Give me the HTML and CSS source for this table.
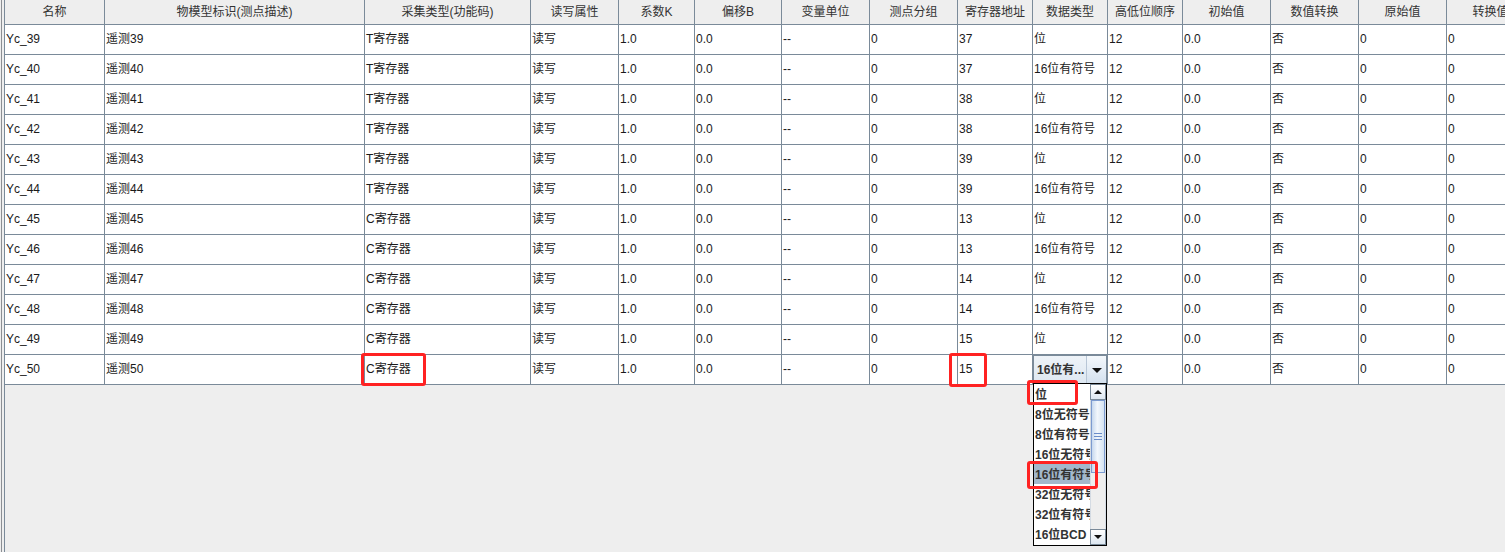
FILE: index.html
```html
<!DOCTYPE html>
<html lang="zh">
<head>
<meta charset="utf-8">
<title>测点表</title>
<link rel="stylesheet" href="styles.css">
</head>
<body>
<div class="screen">
  <div class="pane">
    <div class="table">
      <div class="row head">
        <div class="c">名称</div><div class="c">物模型标识(测点描述)</div><div class="c">采集类型(功能码)</div><div class="c">读写属性</div><div class="c">系数K</div><div class="c">偏移B</div><div class="c">变量单位</div><div class="c">测点分组</div><div class="c">寄存器地址</div><div class="c">数据类型</div><div class="c">高低位顺序</div><div class="c">初始值</div><div class="c">数值转换</div><div class="c">原始值</div><div class="c">转换值</div>
      </div>
      <div class="row"><div class="c">Yc_39</div><div class="c">遥测39</div><div class="c">T寄存器</div><div class="c">读写</div><div class="c">1.0</div><div class="c">0.0</div><div class="c">--</div><div class="c">0</div><div class="c">37</div><div class="c">位</div><div class="c">12</div><div class="c">0.0</div><div class="c">否</div><div class="c">0</div><div class="c">0</div></div>
      <div class="row"><div class="c">Yc_40</div><div class="c">遥测40</div><div class="c">T寄存器</div><div class="c">读写</div><div class="c">1.0</div><div class="c">0.0</div><div class="c">--</div><div class="c">0</div><div class="c">37</div><div class="c">16位有符号</div><div class="c">12</div><div class="c">0.0</div><div class="c">否</div><div class="c">0</div><div class="c">0</div></div>
      <div class="row"><div class="c">Yc_41</div><div class="c">遥测41</div><div class="c">T寄存器</div><div class="c">读写</div><div class="c">1.0</div><div class="c">0.0</div><div class="c">--</div><div class="c">0</div><div class="c">38</div><div class="c">位</div><div class="c">12</div><div class="c">0.0</div><div class="c">否</div><div class="c">0</div><div class="c">0</div></div>
      <div class="row"><div class="c">Yc_42</div><div class="c">遥测42</div><div class="c">T寄存器</div><div class="c">读写</div><div class="c">1.0</div><div class="c">0.0</div><div class="c">--</div><div class="c">0</div><div class="c">38</div><div class="c">16位有符号</div><div class="c">12</div><div class="c">0.0</div><div class="c">否</div><div class="c">0</div><div class="c">0</div></div>
      <div class="row"><div class="c">Yc_43</div><div class="c">遥测43</div><div class="c">T寄存器</div><div class="c">读写</div><div class="c">1.0</div><div class="c">0.0</div><div class="c">--</div><div class="c">0</div><div class="c">39</div><div class="c">位</div><div class="c">12</div><div class="c">0.0</div><div class="c">否</div><div class="c">0</div><div class="c">0</div></div>
      <div class="row"><div class="c">Yc_44</div><div class="c">遥测44</div><div class="c">T寄存器</div><div class="c">读写</div><div class="c">1.0</div><div class="c">0.0</div><div class="c">--</div><div class="c">0</div><div class="c">39</div><div class="c">16位有符号</div><div class="c">12</div><div class="c">0.0</div><div class="c">否</div><div class="c">0</div><div class="c">0</div></div>
      <div class="row"><div class="c">Yc_45</div><div class="c">遥测45</div><div class="c">C寄存器</div><div class="c">读写</div><div class="c">1.0</div><div class="c">0.0</div><div class="c">--</div><div class="c">0</div><div class="c">13</div><div class="c">位</div><div class="c">12</div><div class="c">0.0</div><div class="c">否</div><div class="c">0</div><div class="c">0</div></div>
      <div class="row"><div class="c">Yc_46</div><div class="c">遥测46</div><div class="c">C寄存器</div><div class="c">读写</div><div class="c">1.0</div><div class="c">0.0</div><div class="c">--</div><div class="c">0</div><div class="c">13</div><div class="c">16位有符号</div><div class="c">12</div><div class="c">0.0</div><div class="c">否</div><div class="c">0</div><div class="c">0</div></div>
      <div class="row"><div class="c">Yc_47</div><div class="c">遥测47</div><div class="c">C寄存器</div><div class="c">读写</div><div class="c">1.0</div><div class="c">0.0</div><div class="c">--</div><div class="c">0</div><div class="c">14</div><div class="c">位</div><div class="c">12</div><div class="c">0.0</div><div class="c">否</div><div class="c">0</div><div class="c">0</div></div>
      <div class="row"><div class="c">Yc_48</div><div class="c">遥测48</div><div class="c">C寄存器</div><div class="c">读写</div><div class="c">1.0</div><div class="c">0.0</div><div class="c">--</div><div class="c">0</div><div class="c">14</div><div class="c">16位有符号</div><div class="c">12</div><div class="c">0.0</div><div class="c">否</div><div class="c">0</div><div class="c">0</div></div>
      <div class="row"><div class="c">Yc_49</div><div class="c">遥测49</div><div class="c">C寄存器</div><div class="c">读写</div><div class="c">1.0</div><div class="c">0.0</div><div class="c">--</div><div class="c">0</div><div class="c">15</div><div class="c">位</div><div class="c">12</div><div class="c">0.0</div><div class="c">否</div><div class="c">0</div><div class="c">0</div></div>
      <div class="row"><div class="c">Yc_50</div><div class="c">遥测50</div><div class="c">C寄存器</div><div class="c">读写</div><div class="c">1.0</div><div class="c">0.0</div><div class="c">--</div><div class="c">0</div><div class="c">15</div><div class="c combo-cell"><div class="combo"><span class="combo-text">16位有...</span><span class="combo-btn"><span class="tri-down"></span></span></div></div><div class="c">12</div><div class="c">0.0</div><div class="c">否</div><div class="c">0</div><div class="c">0</div></div>
    </div>
  </div>

  <div class="popup">
    <ul class="list">
      <li>位</li>
      <li>8位无符号</li>
      <li>8位有符号</li>
      <li>16位无符号</li>
      <li class="sel">16位有符号</li>
      <li>32位无符号</li>
      <li>32位有符号</li>
      <li>16位BCD</li>
    </ul>
    <div class="sbar">
      <div class="sbtn"><span class="tri-up"></span></div>
      <div class="strack">
        <div class="thumb"><span class="grip"></span><span class="grip"></span><span class="grip"></span></div>
      </div>
      <div class="sbtn"><span class="tri-down"></span></div>
    </div>
  </div>

  <div class="mark mark-type"></div>
  <div class="mark mark-addr"></div>
  <div class="mark mark-bit"></div>
  <div class="mark mark-sel"></div>
</div>
</body>
</html>
```

FILE: styles.css
```css
html, body {
  margin: 0;
  padding: 0;
  background: #eeeeee;
  overflow: hidden;
}
.screen {
  position: relative;
  width: 1505px;
  height: 552px;
  overflow: hidden;
  font-family: "Liberation Sans", "Noto Sans CJK SC", sans-serif;
  font-size: 12px;
  color: #1a1a1a;
}
.pane {
  margin-left: 1px;
  height: 552px;
  border-left: 1px solid #8c8f94;
  padding-left: 2px;
}
.table {
  display: grid;
  grid-template-columns: 100px 260px 166px 88px 76px 87px 88px 88px 75px 75px 75px 88px 88px 88px 88px;
  width: max-content;
  border-left: 1px solid #7a8a99;
  height: 552px;
  align-content: start;
}
.row {
  display: contents;
}
.c {
  box-sizing: border-box;
  height: 30px;
  border-right: 1px solid #7a8a99;
  border-bottom: 1px solid #7a8a99;
  background: #fff;
  padding: 0 1px 1px;
  display: flex;
  align-items: center;
  white-space: nowrap;
  overflow: hidden;
  line-height: 14px;
}
.head .c {
  height: 25px;
  background: #eeeeee;
  justify-content: center;
  color: #333;
  padding-bottom: 1px;
}
.combo-cell {
  padding: 0;
  align-items: stretch;
}
.combo {
  flex: 1;
  display: flex;
  box-sizing: border-box;
  border: 1px solid #7a8a99;
  border-bottom: 0;
  background: linear-gradient(#eef3f8, #dde7f1);
}
.combo-text {
  flex: 1;
  display: flex;
  align-items: center;
  padding-left: 3px;
  font-weight: bold;
  color: #333;
  overflow: hidden;
}
.combo-btn {
  width: 19px;
  border-left: 1px solid #b8c6d6;
  display: flex;
  align-items: center;
  justify-content: center;
  background: linear-gradient(#f4f8fc, #d3e0ee);
}
.tri-down {
  width: 0;
  height: 0;
  border-left: 5px solid transparent;
  border-right: 5px solid transparent;
  border-top: 5px solid #111;
}
.tri-up {
  width: 0;
  height: 0;
  border-left: 5px solid transparent;
  border-right: 5px solid transparent;
  border-bottom: 5px solid #111;
}

/* popup list */
.popup {
  position: absolute;
  left: 1033px;
  top: 383px;
  width: 74px;
  height: 163px;
  box-sizing: border-box;
  border: 1px solid #000;
  background: #fff;
  display: flex;
}
.list {
  list-style: none;
  margin: 0;
  padding: 0;
  width: 56px;
  overflow: hidden;
}
.list li {
  box-sizing: border-box;
  height: 20px;
  padding-top: 2px;
  line-height: 18px;
  padding-left: 1px;
  font-weight: bold;
  color: #333;
  white-space: nowrap;
  overflow: hidden;
}
.list li.sel {
  background: #a3b8cc;
}
.sbar {
  width: 16px;
  display: flex;
  flex-direction: column;
  background: #eeeeee;
}
.sbtn {
  height: 16px;
  box-sizing: border-box;
  border: 1px solid #7a8a99;
  background: linear-gradient(#ffffff, #dde7f1);
  display: flex;
  align-items: center;
  justify-content: center;
}
.sbtn .tri-up, .sbtn .tri-down {
  border-left-width: 4px;
  border-right-width: 4px;
}
.sbtn .tri-up { border-bottom-width: 4px; }
.sbtn .tri-down { border-top-width: 4px; }
.strack {
  flex: 1;
  border-left: 1px solid #d4dbe3;
  border-right: 1px solid #d4dbe3;
  background: #eeeeee;
}
.thumb {
  height: 73px;
  box-sizing: border-box;
  border: 1px solid #7c9bd0;
  background: linear-gradient(90deg, #c6d8ee, #f2f7fc 45%, #d5e3f2);
  display: flex;
  flex-direction: column;
  align-items: center;
  justify-content: center;
  gap: 2px;
}
.grip {
  width: 8px;
  height: 1px;
  background: #6a8cc8;
}

/* red annotation boxes */
.mark {
  position: absolute;
  box-sizing: border-box;
  border: 3px solid #ff2222;
  border-radius: 3px;
}
.mark-type { left: 361px; top: 353px; width: 65px; height: 33px; }
.mark-addr { left: 949px; top: 353px; width: 38px; height: 34px; }
.mark-bit  { left: 1027px; top: 380px; width: 51px; height: 25px; }
.mark-sel  { left: 1027px; top: 461px; width: 71px; height: 28px; }
```
